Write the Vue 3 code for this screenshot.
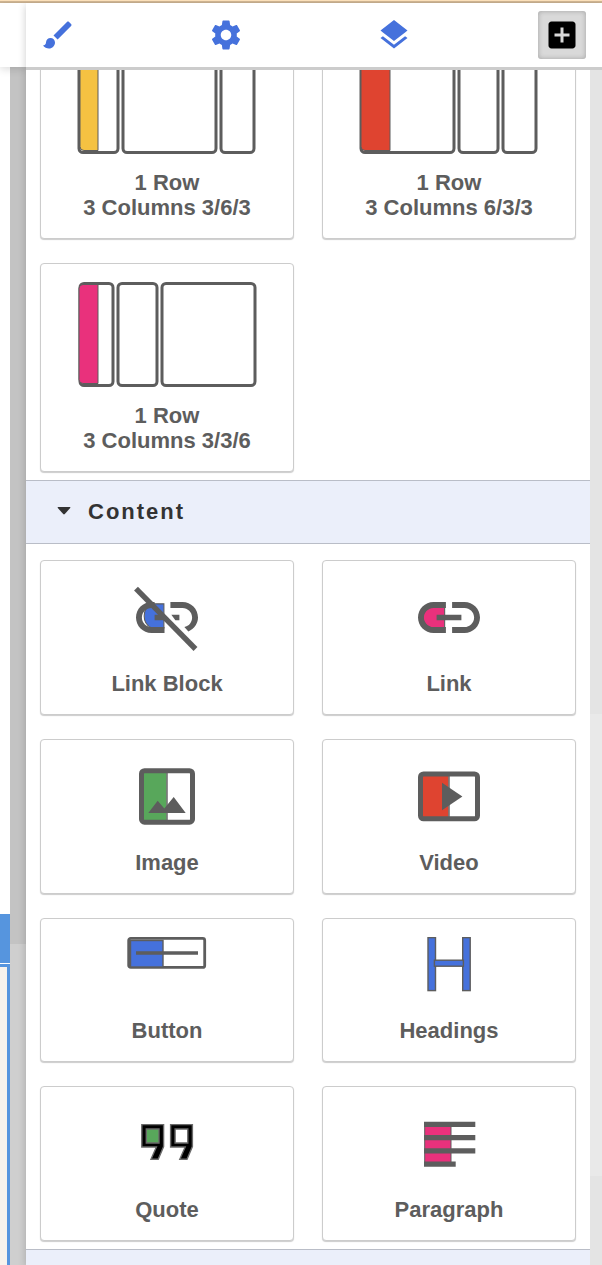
<script setup>
import { ref } from 'vue'

const tabs = ['Styles', 'Settings', 'Layers', 'Blocks']
const active = ref('Blocks')
const open = ref(true)

const layouts = [
  {
    lines: ['1 Row', '3 Columns 3/6/3'],
    boxes: [[2, 39], [46, 93], [144, 33]],
    fill: { x: 3, w: 18, color: '#f5c242' }
  },
  {
    lines: ['1 Row', '3 Columns 6/3/3'],
    boxes: [[2, 93], [100, 39], [144, 33]],
    fill: { x: 2, w: 29, color: '#df4430' }
  },
  {
    lines: ['1 Row', '3 Columns 3/3/6'],
    boxes: [[3, 33], [41, 39], [85, 93]],
    fill: { x: 2, w: 19, color: '#e9317c' }
  }
]

const blocks = ['Link Block', 'Link', 'Image', 'Video', 'Button', 'Headings', 'Quote', 'Paragraph']
const isShort = (name) => name === 'Button' || name === 'Headings'
</script>

<template>
  <div class="editor">
    <div class="canvas" aria-hidden="true">
      <div class="canvas-bar"></div>
      <div class="canvas-body">
        <div class="page">
          <div class="page-blank"></div>
          <div class="page-tag"></div>
          <div class="page-frame"></div>
        </div>
        <div class="gutter"><div class="gutter-dark"></div></div>
      </div>
    </div>

    <main class="panel">
      <nav class="tabs">
        <button
          v-for="tab in tabs"
          :key="tab"
          type="button"
          class="tab"
          :class="{ active: active === tab }"
          :aria-label="tab"
          :aria-pressed="active === tab"
          @click="active = tab"
        >
          <svg viewBox="0 0 24 24" width="36" height="36" aria-hidden="true">
            <path v-if="tab === 'Styles'" d="M7 14c-1.66 0-3 1.34-3 3 0 1.31-1.16 2-2 2 .92 1.22 2.49 2 4 2 2.21 0 4-1.79 4-4 0-1.66-1.34-3-3-3zm13.71-9.37l-1.34-1.34c-.39-.39-1.02-.39-1.41 0L9 12.25 11.75 15l8.96-8.96c.39-.39.39-1.02 0-1.41z" />
            <path v-else-if="tab === 'Settings'" d="M19.14 12.94c.04-.3.06-.61.06-.94 0-.32-.02-.64-.07-.94l2.03-1.58c.18-.14.23-.41.12-.61l-1.92-3.32c-.12-.22-.37-.29-.59-.22l-2.39.96c-.5-.38-1.03-.7-1.62-.94l-.36-2.54c-.04-.24-.24-.41-.48-.41h-3.84c-.24 0-.43.17-.47.41l-.36 2.54c-.59.24-1.13.57-1.62.94l-2.39-.96c-.22-.08-.47 0-.59.22L2.74 8.87c-.12.21-.08.47.12.61l2.03 1.58c-.05.3-.09.63-.09.94s.02.64.07.94l-2.03 1.58c-.18.14-.23.41-.12.61l1.92 3.32c.12.22.37.29.59.22l2.39-.96c.5.38 1.03.7 1.62.94l.36 2.54c.05.24.24.41.48.41h3.84c.24 0 .44-.17.47-.41l.36-2.54c.59-.24 1.13-.56 1.62-.94l2.39.96c.22.08.47 0 .59-.22l1.92-3.32c.12-.22.07-.47-.12-.61l-2.01-1.58zM12 15.5c-1.93 0-3.5-1.57-3.5-3.5s1.57-3.5 3.5-3.5 3.5 1.57 3.5 3.5-1.57 3.5-3.5 3.5z" />
            <path v-else-if="tab === 'Layers'" d="M11.99 18.54l-7.37-5.73L3 14.07l9 7 9-7-1.63-1.27-7.38 5.74zM12 16l7.36-5.73L21 9l-9-7-9 7 1.63 1.27L12 16z" />
            <path v-else d="M19 3H5c-1.11 0-2 .9-2 2v14c0 1.1.89 2 2 2h14c1.1 0 2-.9 2-2V5c0-1.1-.9-2-2-2zm-2 10h-4v4h-2v-4H7v-2h4V7h2v4h4v2z" />
          </svg>
        </button>
      </nav>

      <div class="scroller">
        <div class="content">
          <div class="scrolled">
            <section class="grid">
              <button v-for="item in layouts" :key="item.lines[1]" type="button" class="card">
                <svg class="art tall" viewBox="0 0 180 105" width="180" height="105" aria-hidden="true">
                  <rect
                    v-for="box in item.boxes"
                    :key="box[0]"
                    :x="box[0]"
                    y="1.5"
                    :width="box[1]"
                    height="102"
                    rx="4"
                    class="outline"
                  />
                  <path
                    :d="`M${item.fill.x + 4} 2.5h${item.fill.w - 4}v99h${4 - item.fill.w}q-4 0 -4 -4v-91q0 -4 4 -4z`"
                    :fill="item.fill.color"
                    stroke="#5d5d5d"
                    stroke-width="1"
                  />
                </svg>
                <span v-for="line in item.lines" :key="line" class="label">{{ line }}</span>
              </button>
            </section>

            <button type="button" class="section-head" :aria-expanded="open" @click="open = !open">
              <svg viewBox="0 0 14 8" width="14" height="8" aria-hidden="true">
                <path d="M1.2 0h11.6q1 .3.4 1.1L7.8 7q-.8.8-1.6 0L.8 1.1Q.2.3 1.2 0z" fill="#333" />
              </svg>
              Content
            </button>

            <section v-if="open" class="grid">
              <button v-for="name in blocks" :key="name" type="button" class="card">
                <svg
                  class="art"
                  :viewBox="isShort(name) ? '0 0 80 81' : '0 0 80 92'"
                  width="80"
                  :height="isShort(name) ? 81 : 92"
                  aria-hidden="true"
                >
                  <template v-if="name === 'Link Block'">
                    <g transform="translate(2.8 1.3) scale(3.1)">
                      <path d="M11 7.6H7a4.4 4.4 0 0 0 0 7.8h4z" fill="#4571dc" stroke="#5d5d5d" stroke-width=".35" />
                      <path d="M3.9 12c0-1.71 1.39-3.1 3.1-3.1h1V7H7c-2.76 0-5 2.24-5 5s2.24 5 5 5h4.2v-1.9H7c-1.71 0-3.1-1.39-3.1-3.1zM8 11.1h3v1.8H8zM17 7h-3.9v1.9H17c1.71 0 3.1 1.39 3.1 3.1 0 1.5-1 2.8-2.5 3.1l1.3 1.4C20.8 15.6 22 13.95 22 12c0-2.76-2.24-5-5-5zM13.4 11.1H16v1.8h-1.3z" fill="#5d5d5d" />
                    </g>
                    <path d="M9 9.7L68.5 70" stroke="#5d5d5d" stroke-width="5.4" />
                  </template>
                  <g v-else-if="name === 'Link'" transform="translate(2.8 1.3) scale(3.1)">
                    <path d="M10.6 8.6H7a3.4 3.4 0 0 0 0 6.8h3.6z" fill="#e9317c" stroke="#5d5d5d" stroke-width=".35" />
                    <path d="M3.9 12c0-1.71 1.39-3.1 3.1-3.1h4V7H7c-2.76 0-5 2.24-5 5s2.24 5 5 5h4v-1.9H7c-1.71 0-3.1-1.39-3.1-3.1zM8 12.9h8v-1.8H8zM17 7h-4v1.9h4c1.71 0 3.1 1.39 3.1 3.1s-1.39 3.1-3.1 3.1h-4V17h4c2.76 0 5-2.24 5-5s-2.24-5-5-5z" fill="#5d5d5d" />
                  </g>
                  <template v-else-if="name === 'Image'">
                    <rect x="17" y="15" width="22.5" height="48" fill="#58a75b" />
                    <path d="M40 14v48" stroke="#5d5d5d" stroke-width="1.4" />
                    <rect x="14.5" y="12.7" width="51" height="51.5" rx="3" fill="none" stroke="#5d5d5d" stroke-width="5" />
                    <path d="M21.3 55l9.4-12.3 6.6 7.8L46.7 39l12 16z" fill="#5d5d5d" />
                  </template>
                  <template v-else-if="name === 'Video'">
                    <rect x="13" y="18" width="26.5" height="41" fill="#df4430" />
                    <path d="M40 18v41" stroke="#5d5d5d" stroke-width="1.4" />
                    <rect x="11.5" y="16" width="57" height="44.8" rx="3" fill="none" stroke="#5d5d5d" stroke-width="5" />
                    <path d="M33 24.7l20.4 13.7L33 52.2z" fill="#5d5d5d" />
                  </template>
                  <template v-else-if="name === 'Button'">
                    <rect x="1.7" y="1.4" width="76" height="29" rx="2" fill="none" stroke="#5d5d5d" stroke-width="2.8" />
                    <rect x="3.5" y="3.5" width="32.5" height="26.5" fill="#4571dc" stroke="#5d5d5d" stroke-width="1.4" />
                    <path d="M9 16h62" stroke="#5d5d5d" stroke-width="3.4" />
                  </template>
                  <g v-else-if="name === 'Headings'" fill="#4571dc" stroke="#5d5d5d" stroke-width="1.4">
                    <rect x="19" y=".6" width="7.5" height="53" />
                    <rect x="53.7" y=".6" width="7.5" height="53" />
                    <rect x="25.4" y="23.2" width="29" height="6" />
                  </g>
                  <template v-else-if="name === 'Quote'">
                    <rect x="19" y="24" width="13" height="14" fill="#58a75b" />
                    <g fill="#000" fill-rule="evenodd" stroke="#6b6b6b" stroke-width="1.4">
                      <path d="M14.8 19.6H36.6v22L31.2 54.2H24L29.4 42H14.8zM19.3 24v14h12.7V24z" />
                      <path d="M43.6 19.6h21.8v22L60 54.2h-7.2L58.2 42H43.6zM48.1 24v14h12.7V24z" />
                    </g>
                  </template>
                  <template v-else>
                    <rect x="15.7" y="18" width="26.3" height="40" fill="#e9317c" stroke="#5d5d5d" />
                    <path d="M15 19.3h51.3M15 32.6h51.3M15 45.9h51.3M15 59.2h31.7" stroke="#5d5d5d" stroke-width="5.2" />
                  </template>
                </svg>
                <span class="label">{{ name }}</span>
              </button>
            </section>

            <div class="section-head"></div>
          </div>
        </div>
        <div class="track" aria-hidden="true"><div class="thumb"></div></div>
      </div>
    </main>
  </div>
</template>

<style>
html,
body {
  margin: 0;
  overflow: hidden;
}
</style>

<style scoped>
.editor {
  display: flex;
  box-sizing: border-box;
  height: 100vh;
  overflow: hidden;
  border-top: 2px solid #cdb391;
  box-shadow: inset 0 1px #cdb391;
  background: #fff;
  font-family: "Liberation Sans", Arial, Helvetica, sans-serif;
}
.editor::before {
  content: "";
  position: absolute;
  top: 0;
  left: 0;
  right: 0;
  height: 1px;
  background: #fbe0ba;
}
.canvas {
  display: flex;
  flex: 0 0 26px;
  flex-direction: column;
  padding-top: 1px;
}
.canvas-bar {
  z-index: 1;
  flex: 0 0 64px;
  background: #fff;
  box-shadow: 0 2px 8px rgba(0, 0, 0, 0.15);
}
.canvas-body {
  display: flex;
  flex: 1;
}
.page {
  display: flex;
  flex: 0 0 10px;
  flex-direction: column;
}
.page-blank {
  flex: 0 0 847px;
}
.page-tag {
  flex: 0 0 49px;
  margin-bottom: 1px;
  background: #5695de;
}
.page-frame {
  flex: 1;
  border-top: 3px solid #5695de;
  border-right: 3px solid #5695de;
  background: #f7f3ed;
}
.gutter {
  flex: 1;
  background: #cfcfcf;
}
.gutter-dark {
  height: 877px;
  background: #c3c3c3;
}
.panel {
  z-index: 2;
  display: flex;
  flex: 1;
  flex-direction: column;
  min-width: 0;
  margin-top: 1px;
  background: #fff;
  box-shadow: 0 2px 8px rgba(0, 0, 0, 0.2);
}
.tabs {
  display: flex;
  flex: 0 0 64px;
  align-items: center;
  justify-content: space-between;
  padding: 0 16px 0 8px;
  border-bottom: 3px solid #ccc;
}
.tab {
  display: flex;
  align-items: center;
  justify-content: center;
  width: 48px;
  height: 48px;
  padding: 0;
  border: 0;
  border-radius: 3px;
  background: none;
  color: #4571dc;
}
.tab svg {
  fill: currentColor;
}
.tab.active {
  background: #d9d9d9;
  box-shadow: inset 0 0 5px rgba(0, 0, 0, 0.25);
  color: #000;
}
.scroller {
  display: flex;
  flex: 1;
  min-height: 0;
}
.content {
  flex: 1;
  min-width: 0;
  overflow: hidden;
}
.scrolled {
  margin-top: -56px;
}
.grid {
  display: grid;
  grid-template-columns: 1fr 1fr;
  gap: 24px 28px;
  padding: 16px 14px 8px;
}
.card {
  display: flex;
  flex-direction: column;
  align-items: center;
  padding: 18px;
  border: 1px solid #ccc;
  border-radius: 4px;
  background: #fff;
  box-shadow: 0 1px 1px rgba(0, 0, 0, 0.2);
  color: #5d5d5d;
  font: bold 22px/25px "Liberation Sans", Arial, Helvetica, sans-serif;
}
.art {
  display: block;
  flex: none;
}
.art.tall {
  margin-bottom: 16px;
}
.outline {
  fill: none;
  stroke: #5d5d5d;
  stroke-width: 3;
}
.label {
  white-space: nowrap;
}
.section-head {
  display: flex;
  box-sizing: border-box;
  align-items: center;
  gap: 17px;
  width: 100%;
  height: 64px;
  padding: 0 31px 2px;
  border: 0;
  border-top: 1px solid #b9bdc7;
  border-bottom: 1px solid #b9bdc7;
  background: #ebeffa;
  color: #333;
  font: bold 22px/25px "Liberation Sans", Arial, Helvetica, sans-serif;
  letter-spacing: 2px;
}
.track {
  flex: 0 0 12px;
  padding-top: 644px;
  background: #e4e4e4;
}
.thumb {
  height: 462px;
  background: #e9e9e9;
}
</style>
